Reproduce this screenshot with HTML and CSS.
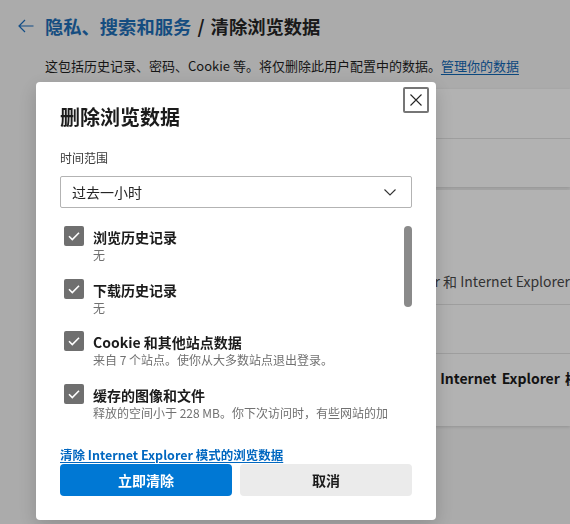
FILE: index.html
```html
<!DOCTYPE html>
<html lang="zh-CN">
<head>
<meta charset="utf-8">
<title>清除浏览数据</title>
<link rel="stylesheet" href="styles.css">
</head>
<body>
<main class="page">
  <header class="page-head">
    <a class="back" href="#" aria-label="返回">
      <svg viewBox="0 0 16 14" width="16" height="14"><path d="M15.5 7H1M7 1L1 7l6 6" fill="none" stroke="currentColor" stroke-width="1.2"/></svg>
    </a>
    <h1 class="page-title"><span class="crumb">隐私、搜索和服务</span> / 清除浏览数据</h1>
  </header>
  <p class="page-desc">这包括历史记录、密码、Cookie 等。将仅删除此用户配置中的数据。<a href="#">管理你的数据</a></p>

  <section class="card">
    <div class="row">立即清除浏览数据</div>
    <div class="row">选择每次关闭浏览器时要清除的内容</div>
  </section>

  <section class="card card-ie">
    <div class="row row-a">
      <h2 class="ie-head">清除 Internet Explorer 的浏览数据</h2>
      <p class="ie-text">包括 Internet Explorer 和 Internet Explorer 模式中的历史记录、Cookie 等</p>
    </div>
    <div class="row">选择要清除的内容</div>
    <div class="row row-c"><span class="ie-bold">同时清除 Internet Explorer 模式的浏览数据</span></div>
  </section>
</main>

<div class="overlay"></div>

<div class="dialog" role="dialog" aria-labelledby="dlg-title">
  <button class="close" aria-label="关闭">
    <svg viewBox="0 0 12 12" width="12" height="12"><path d="M0.5 0.5l11 11M11.5 0.5l-11 11" fill="none" stroke="#262626" stroke-width="1.1"/></svg>
  </button>
  <h2 class="dlg-title" id="dlg-title">删除浏览数据</h2>
  <label class="field-label">时间范围</label>
  <div class="select">
    <span>过去一小时</span>
    <svg viewBox="0 0 12 7" width="12" height="7"><path d="M0.5 0.5l5.5 5.5 5.5-5.5" fill="none" stroke="#333" stroke-width="1.1"/></svg>
  </div>

  <div class="list">
    <div class="items">
      <div class="item">
        <span class="cb"><svg viewBox="0 0 20 20" width="20" height="20"><path d="M5 10.2l3.3 3.3L15 6.8" fill="none" stroke="#fff" stroke-width="1.6"/></svg></span>
        <div class="item-text">
          <div class="item-title">浏览历史记录</div>
          <div class="item-sub">无</div>
        </div>
      </div>
      <div class="item">
        <span class="cb"><svg viewBox="0 0 20 20" width="20" height="20"><path d="M5 10.2l3.3 3.3L15 6.8" fill="none" stroke="#fff" stroke-width="1.6"/></svg></span>
        <div class="item-text">
          <div class="item-title">下载历史记录</div>
          <div class="item-sub">无</div>
        </div>
      </div>
      <div class="item">
        <span class="cb"><svg viewBox="0 0 20 20" width="20" height="20"><path d="M5 10.2l3.3 3.3L15 6.8" fill="none" stroke="#fff" stroke-width="1.6"/></svg></span>
        <div class="item-text">
          <div class="item-title">Cookie 和其他站点数据</div>
          <div class="item-sub">来自 7 个站点。使你从大多数站点退出登录。</div>
        </div>
      </div>
      <div class="item">
        <span class="cb"><svg viewBox="0 0 20 20" width="20" height="20"><path d="M5 10.2l3.3 3.3L15 6.8" fill="none" stroke="#fff" stroke-width="1.6"/></svg></span>
        <div class="item-text">
          <div class="item-title">缓存的图像和文件</div>
          <div class="item-sub">释放的空间小于 228 MB。你下次访问时，有些网站的加载速度可能会更慢。</div>
        </div>
      </div>
      <div class="item">
        <span class="cb cb-off"></span>
        <div class="item-text">
          <div class="item-title">密码</div>
          <div class="item-sub">无</div>
        </div>
      </div>
    </div>
    <div class="thumb"></div>
  </div>

  <div class="ie-line"><a class="ie-link" href="#">清除 Internet Explorer 模式的浏览数据</a></div>

  <div class="actions">
    <button class="btn btn-primary">立即清除</button>
    <button class="btn btn-secondary">取消</button>
  </div>
</div>
</body>
</html>
```

FILE: styles.css
```css
* {
  box-sizing: border-box;
  margin: 0;
  padding: 0;
}

html,
body {
  width: 570px;
  height: 524px;
  overflow: hidden;
}

body {
  background: #f5f5f5;
  font-family: "Noto Sans CJK SC", "Noto Sans", sans-serif;
  color: #1b1b1b;
}

/* ---------- page behind the dialog ---------- */
.page {
  padding-top: 13px;
}

.page-head {
  display: flex;
  align-items: center;
  gap: 11px;
  height: 26px;
  padding-left: 18px;
}

.back {
  display: flex;
  color: #1a6fc0;
}

.page-title {
  font-size: 18.3px;
  font-weight: 700;
  line-height: 26px;
  color: #262626;
  white-space: nowrap;
  word-spacing: 2px;
}

.crumb {
  color: #1f6fb8;
}

.page-desc {
  margin: 17px 0 0 45px;
  font-size: 13px;
  line-height: 20px;
  color: #1f1f1f;
  white-space: nowrap;
}

.page-desc a {
  color: #1167b5;
  text-decoration: underline;
  text-underline-offset: 3px;
}

.card {
  margin: 13px 0 0 45px;
  background: #fff;
  box-shadow: 0 1px 3px rgba(0, 0, 0, 0.14);
}

.card-ie {
  margin-top: 3px;
}

.row {
  display: flex;
  align-items: center;
  height: 49px;
  padding-left: 20px;
  font-size: 14px;
  white-space: nowrap;
}

.row + .row {
  border-top: 1px solid #e3e3e3;
}

.row-a {
  height: 114px;
  flex-direction: column;
  align-items: flex-start;
  justify-content: flex-end;
  padding-bottom: 13px;
}

.ie-head {
  font-size: 14px;
  font-weight: 700;
  line-height: 20px;
  margin-bottom: 6px;
}

.ie-text {
  padding-left: 234px;
  font-size: 14px;
  line-height: 20px;
  color: #4a4a4a;
}

.row-c {
  height: 73px;
  align-items: flex-start;
  padding-top: 14px;
}

.ie-bold {
  padding-left: 314px;
  font-weight: 700;
  line-height: 20px;
  word-spacing: 2px;
  color: #1b1b1b;
}

/* ---------- modal ---------- */
.overlay {
  position: fixed;
  inset: 0;
  background: rgba(0, 0, 0, 0.3);
}

.dialog {
  position: fixed;
  left: 36px;
  top: 82px;
  width: 400px;
  padding: 21px 24px 24px;
  background: #fff;
  border-radius: 4px;
  box-shadow: 0 6px 20px rgba(0, 0, 0, 0.18);
}

.close {
  position: absolute;
  top: 5px;
  right: 7px;
  width: 26px;
  height: 26px;
  display: flex;
  align-items: center;
  justify-content: center;
  background: #fff;
  border: 2px solid #767676;
  border-radius: 2px;
}

.dlg-title {
  font-size: 20px;
  font-weight: 700;
  line-height: 28px;
  color: #1b1b1b;
}

.field-label {
  display: block;
  margin-top: 18px;
  font-size: 12px;
  line-height: 18px;
  color: #3a3a3a;
}

.select {
  margin-top: 9px;
  height: 32px;
  display: flex;
  align-items: center;
  justify-content: space-between;
  padding: 0 15px 0 11px;
  border: 1px solid #b3b3b3;
  border-radius: 2px;
  font-size: 14px;
  color: #242424;
}

.list {
  position: relative;
  margin-top: 10px;
  height: 205px;
  overflow: hidden;
}

.items {
  display: flex;
  flex-direction: column;
  gap: 15.5px;
  padding: 8px 0 0 4px;
}

.item {
  display: flex;
  align-items: flex-start;
  gap: 9px;
}

.cb {
  flex: none;
  width: 20px;
  height: 20px;
  display: flex;
  background: #6f6f6f;
  border-radius: 2px;
}

.cb-off {
  background: #fff;
  border: 1px solid #6f6f6f;
}

.item-text {
  width: 305px;
  padding-top: 1px;
}

.item-title {
  font-size: 14px;
  font-weight: 700;
  line-height: 20px;
  color: #1b1b1b;
}

.item-sub {
  font-size: 12px;
  line-height: 16px;
  color: #717171;
}

.thumb {
  position: absolute;
  right: 0;
  top: 8px;
  width: 8px;
  height: 81px;
  border-radius: 4px;
  background: #8a8a8a;
}

.ie-line {
  margin-top: 21px;
  line-height: 18px;
}

.ie-link {
  font-size: 12.5px;
  font-weight: 600;
  color: #0067c0;
  text-decoration: underline;
  text-underline-offset: 2px;
  white-space: nowrap;
}

.actions {
  display: grid;
  grid-template-columns: 1fr 1fr;
  gap: 8px;
}

.btn {
  height: 32px;
  border: 0;
  border-radius: 4px;
  font-family: inherit;
  font-size: 14px;
  font-weight: 700;
}

.btn-primary {
  background: #0078d4;
  color: #fff;
}

.btn-secondary {
  background: #ebebeb;
  color: #1b1b1b;
}
```
